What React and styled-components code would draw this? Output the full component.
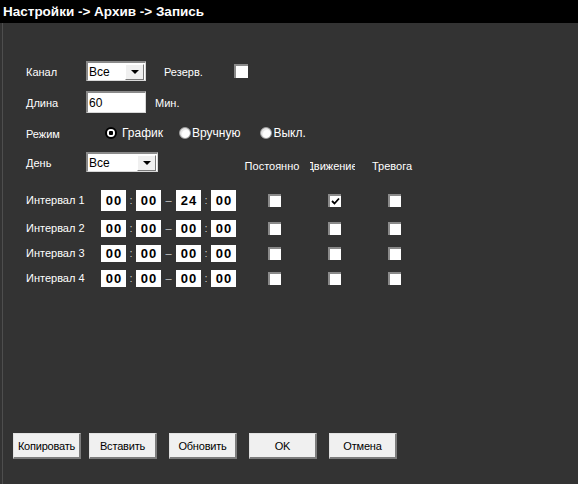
import React from 'react';
import styled, { createGlobalStyle } from 'styled-components';

const GlobalStyle = createGlobalStyle`
  html, body {
    margin: 0;
    padding: 0;
    background: #333333;
  }
  * {
    box-sizing: border-box;
  }
`;

const Page = styled.div`
  width: 578px;
  height: 484px;
  background: #333333;
  display: flex;
  flex-direction: column;
  font-family: 'Liberation Sans', Arial, sans-serif;
  font-size: 11px;
  color: #ffffff;
  overflow: hidden;
`;

const TitleBar = styled.div`
  height: 23px;
  flex-shrink: 0;
  background: #000000;
  display: flex;
  align-items: center;
  padding-left: 3px;
  font-size: 13.5px;
  font-weight: 700;
  color: #ffffff;
`;

const Body = styled.div`
  flex: 1;
  margin-left: 2px;
  border-left: 1px solid #4e4e4e;
  display: flex;
  flex-direction: column;
  padding-top: 37px;
`;

const Row = styled.div`
  display: flex;
  align-items: center;
  height: ${p => p.$h || 22}px;
  margin-top: ${p => p.$mt || 0}px;
  padding-left: 23px;
`;

const Label = styled.div`
  width: ${p => p.$w || 60}px;
  flex-shrink: 0;
  white-space: nowrap;
  padding-top: ${p => p.$pt ?? 2}px;
`;

const SelectBox = styled.div`
  width: ${p => p.$w}px;
  height: 20px;
  background: #ffffff;
  border-top: 2px solid #8a8a8a;
  border-left: 2px solid #8a8a8a;
  border-right: 1px solid #d8d8d8;
  border-bottom: 1px solid #d8d8d8;
  display: flex;
  align-items: center;
  justify-content: space-between;
  color: #000000;
  font-size: 12px;
  padding-left: 1px;
`;

const DropButton = styled.div`
  width: 19px;
  height: 16px;
  margin-right: 1px;
  background: #f0f0f0;
  border-top: 1px solid #ffffff;
  border-left: 1px solid #ffffff;
  border-right: 1px solid #7a7a7a;
  border-bottom: 1px solid #7a7a7a;
  display: flex;
  align-items: center;
  justify-content: center;

  &::after {
    content: '';
    border-left: 4px solid transparent;
    border-right: 4px solid transparent;
    border-top: 4px solid #000000;
  }
`;

const TextInput = styled.div`
  width: 60px;
  height: 22px;
  background: #ffffff;
  border-top: 2px solid #8a8a8a;
  border-left: 2px solid #8a8a8a;
  border-right: 1px solid #d8d8d8;
  border-bottom: 1px solid #d8d8d8;
  color: #000000;
  font-size: 12px;
  display: flex;
  align-items: center;
  padding-left: 1px;
`;

const Box = styled.div`
  width: ${p => p.$size || 13}px;
  height: ${p => p.$size || 13}px;
  flex-shrink: 0;
  margin-left: ${p => p.$ml || 0}px;
  background: #ffffff;
  border-top: 2px solid #8a8a8a;
  border-left: 2px solid #8a8a8a;
  display: flex;
  align-items: center;
  justify-content: center;
`;

const Radio = styled.div`
  width: 12px;
  height: 12px;
  border-radius: 50%;
  flex-shrink: 0;
  background: ${p =>
    p.$on
      ? 'radial-gradient(circle, #000 0 2px, #fff 2.5px)'
      : 'radial-gradient(circle at 60% 60%, #fff 0 3.5px, #e6e6e6 5px)'};
  border: ${p => (p.$on ? '2px solid #000000' : '1px solid #a0a0a0')};
  margin-right: 1px;
`;

const RadioItem = styled.div`
  display: flex;
  align-items: center;
  margin-left: ${p => p.$ml}px;
  white-space: nowrap;
`;

const RadioText = styled.span`
  margin-left: ${p => p.$gap || 0}px;
  font-size: 12px;
`;

const SideText = styled.div`
  margin-left: ${p => p.$ml}px;
  padding-top: 2px;
  white-space: nowrap;
`;

const HeadGroup = styled.div`
  display: flex;
  margin-left: ${p => p.$ml}px;
  padding-top: 8px;
`;

const ColHead = styled.div`
  width: 60px;
  display: flex;
  justify-content: center;
  white-space: nowrap;
`;

const ClipHead = styled.div`
  width: 45px;
  display: flex;
  justify-content: center;
  overflow: hidden;
`;

const TimeBox = styled.div`
  width: 25px;
  height: ${p => p.$h}px;
  background: #ffffff;
  color: #000000;
  display: flex;
  align-items: center;
  justify-content: center;
  font-family: 'Liberation Sans Narrow', 'Liberation Sans', sans-serif;
  font-weight: 700;
  font-size: 13px;
  letter-spacing: 1px;
  padding-left: 1px;
`;

const Sep = styled.div`
  width: ${p => p.$w}px;
  display: flex;
  justify-content: center;
  color: #c8c8c8;
  font-size: 11px;
`;

const CellGroup = styled.div`
  display: flex;
  margin-left: 8px;
`;

const Cell = styled.div`
  width: 60px;
  display: flex;
  justify-content: center;
`;

const ButtonRow = styled.div`
  margin-top: auto;
  margin-bottom: 25px;
  padding-left: 10px;
  display: flex;
  gap: 12px;
`;

const Button = styled.div`
  width: 68px;
  height: 26px;
  background: #f0f0f0;
  border-top: 1px solid #e2e2e2;
  border-left: 1px solid #e2e2e2;
  border-right: 2px solid #7c7c7c;
  border-bottom: 2px solid #7c7c7c;
  color: #000000;
  font-size: 11px;
  letter-spacing: -0.2px;
  display: flex;
  align-items: center;
  justify-content: center;
  margin-right: ${p => p.$mr || 0}px;
`;

const Check = () => (
  <svg width="9" height="8" viewBox="0 0 9 8">
    <path d="M1 4 L3.5 6.5 L8 1.5" stroke="#000" strokeWidth="1.8" fill="none" />
  </svg>
);

const intervals = [
  { name: 'Интервал 1', t: ['00', '00', '24', '00'], h: 21, mt: 16, rowH: 22, move: true },
  { name: 'Интервал 2', t: ['00', '00', '00', '00'], h: 17, mt: 8, rowH: 18 },
  { name: 'Интервал 3', t: ['00', '00', '00', '00'], h: 17, mt: 7, rowH: 18 },
  { name: 'Интервал 4', t: ['00', '00', '00', '00'], h: 17, mt: 7, rowH: 18 },
];

const buttons = ['Копировать', 'Вставить', 'Обновить', 'OK', 'Отмена'];

export default function App() {
  return (
    <Page>
      <GlobalStyle />
      <TitleBar>Настройки -&gt; Архив -&gt; Запись</TitleBar>
      <Body>
        <Row>
          <Label>Канал</Label>
          <SelectBox $w={60}>
            Все
            <DropButton />
          </SelectBox>
          <SideText $ml={18}>Резерв.</SideText>
          <Box $size={14} $ml={31} />
        </Row>
        <Row $mt={9}>
          <Label>Длина</Label>
          <TextInput>60</TextInput>
          <SideText $ml={9}>Мин.</SideText>
        </Row>
        <Row $mt={9}>
          <Label>Режим</Label>
          <RadioItem $ml={19}>
            <Radio $on />
            <RadioText $gap={4}>График</RadioText>
          </RadioItem>
          <RadioItem $ml={16}>
            <Radio />
            <RadioText>Вручную</RadioText>
          </RadioItem>
          <RadioItem $ml={20}>
            <Radio />
            <RadioText>Выкл.</RadioText>
          </RadioItem>
        </Row>
        <Row $mt={7}>
          <Label>День</Label>
          <SelectBox $w={72}>
            Все
            <DropButton />
          </SelectBox>
          <HeadGroup $ml={84}>
            <ColHead>Постоянно</ColHead>
            <ColHead>
              <ClipHead>Движение</ClipHead>
            </ColHead>
            <ColHead>Тревога</ColHead>
          </HeadGroup>
        </Row>
        {intervals.map(iv => (
          <Row key={iv.name} $mt={iv.mt} $h={iv.rowH}>
            <Label $w={75} $pt={0}>{iv.name}</Label>
            <TimeBox $h={iv.h}>{iv.t[0]}</TimeBox>
            <Sep $w={10}>:</Sep>
            <TimeBox $h={iv.h}>{iv.t[1]}</TimeBox>
            <Sep $w={15}>–</Sep>
            <TimeBox $h={iv.h}>{iv.t[2]}</TimeBox>
            <Sep $w={10}>:</Sep>
            <TimeBox $h={iv.h}>{iv.t[3]}</TimeBox>
            <CellGroup>
              <Cell><Box /></Cell>
              <Cell><Box>{iv.move && <Check />}</Box></Cell>
              <Cell><Box /></Cell>
            </CellGroup>
          </Row>
        ))}
        <ButtonRow>
          {buttons.map((b, i) => (
            <Button key={b} $mr={i === 0 ? -4 : 0}>{b}</Button>
          ))}
        </ButtonRow>
      </Body>
    </Page>
  );
}
